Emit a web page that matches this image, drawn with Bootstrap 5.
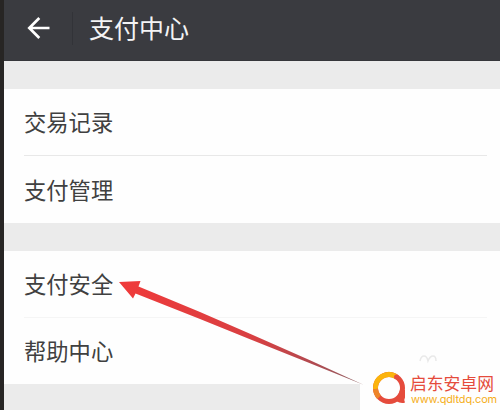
<!DOCTYPE html>
<html lang="zh-CN">
<head>
    <meta charset="UTF-8">
    <meta name="viewport" content="width=device-width, initial-scale=1.0">
    <title>支付中心</title>

    <link href="https://cdn.jsdelivr.net/npm/bootstrap@5.3.0/dist/css/bootstrap.min.css" rel="stylesheet">
    <style>
        body {
            height: 410px;
            background: #ebebeb;
            font-family: "Liberation Sans", "Noto Sans CJK SC", sans-serif;
            border-left: 4px solid #272524;
        }
        .topbar {
            height: 61px;
            padding-left: 23px;
            background: #3a3b40;
            color: #f4f4f5;
            border-bottom: 1px solid #35363a;
        }
        .topbar-line {
            width: 1px;
            height: 33px;
            margin: 0 16px 0 21px;
            background: #323338;
        }
        .topbar-title { font-size: 25px; line-height: 36px; padding-bottom: 3px; }
        .menu-group { background: #fefefe; margin-top: 28px; padding: 0 13px 0 20px; }
        .menu-group a {
            height: 67px;
            padding-top: 5px;
            color: #404040;
            font-size: 22.3px;
            line-height: 1;
        }
        .menu-group a:first-child { border-bottom: 1px solid #e8e8e8; }
        .menu-group.second a { height: 66.5px; }
        .menu-group.second a:first-child { border-bottom-color: #f5f5f5; }
        .overlay { left: 0; top: 0; pointer-events: none; }
        .site-logo { right: 0; bottom: 0; width: 90px; height: 35px; }
        .site-name { font-size: 16.8px; line-height: 19px; color: #e54b3c; }
        .site-url { font: 10.9px/11px Inter, sans-serif; color: #f5ad18; letter-spacing: -.1px; padding-left: 1px; }
    </style>
</head>
<body class="position-relative overflow-hidden">
    <header class="topbar d-flex align-items-center">
        <svg width="24" height="24" viewBox="0 0 24 24" class="mb-1" fill="none" stroke="#fff" stroke-width="2.7">
            <path d="M22.500 12H2.500M12.300 2L2.300 12l10 10"/>
        </svg>
        <div class="topbar-line mb-1"></div>
        <div class="topbar-title">支付中心</div>
    </header>

    <nav class="menu-group">
        <a href="#" class="d-flex align-items-center text-decoration-none">交易记录</a>
        <a href="#" class="d-flex align-items-center text-decoration-none">支付管理</a>
    </nav>
    <nav class="menu-group second">
        <a href="#" class="d-flex align-items-center text-decoration-none">支付安全</a>
        <a href="#" class="d-flex align-items-center text-decoration-none">帮助中心</a>
    </nav>

    <!-- arrow and site logo -->
    <svg class="overlay position-absolute" width="496" height="410" viewBox="4 0 496 410">
        <defs>
            <linearGradient id="arrowFill" gradientUnits="userSpaceOnUse" x1="119" y1="282" x2="364" y2="385">
                <stop offset="0" stop-color="#f03a3a"/>
                <stop offset=".55" stop-color="#d84042"/>
                <stop offset=".8" stop-color="#b04a50"/>
                <stop offset="1" stop-color="#8f6668"/>
            </linearGradient>
        </defs>
        <path d="M360 410V384L366 372V364H500V410z" fill="#fefefe"/>
        <path d="M119 282L140.500 281L138.500 286.500L200 312L250 333.800L310 360.300L364 385L310 363.300L250 339.200L200 319L135.500 293.500L133 298.500z" fill="url(#arrowFill)"/>
        <path d="M420 361q1-5 4-5t4 5q2-5 5-5t3 5" fill="none" stroke="#e9e9e9" stroke-width="1.500"/>
        <circle cx="389" cy="388" r="13.500" fill="none" stroke="#e54b3c" stroke-width="5"/>
        <path d="M375.500 389A13.500 13.500 0 0 1 396 376.500" fill="none" stroke="#fbb40c" stroke-width="5"/>
        <path d="M375.500 389A13.500 13.500 0 0 0 379 397.200" fill="none" stroke="#ee852a" stroke-width="5"/>
        <path d="M400 390H405V397.500Q403.500 400 405 402.500Q401 404 396 401z" fill="#e54b3c"/>
        <circle cx="396.500" cy="377" r="2.500" fill="#e54b3c"/>
    </svg>
    <div class="site-logo position-absolute text-nowrap">
        <div class="site-name">启东安卓网</div>
        <div class="site-url">www.qdltdq.com</div>
    </div>

    <script src="https://cdn.jsdelivr.net/npm/bootstrap@5.3.0/dist/js/bootstrap.bundle.min.js"></script>
</body>
</html>
